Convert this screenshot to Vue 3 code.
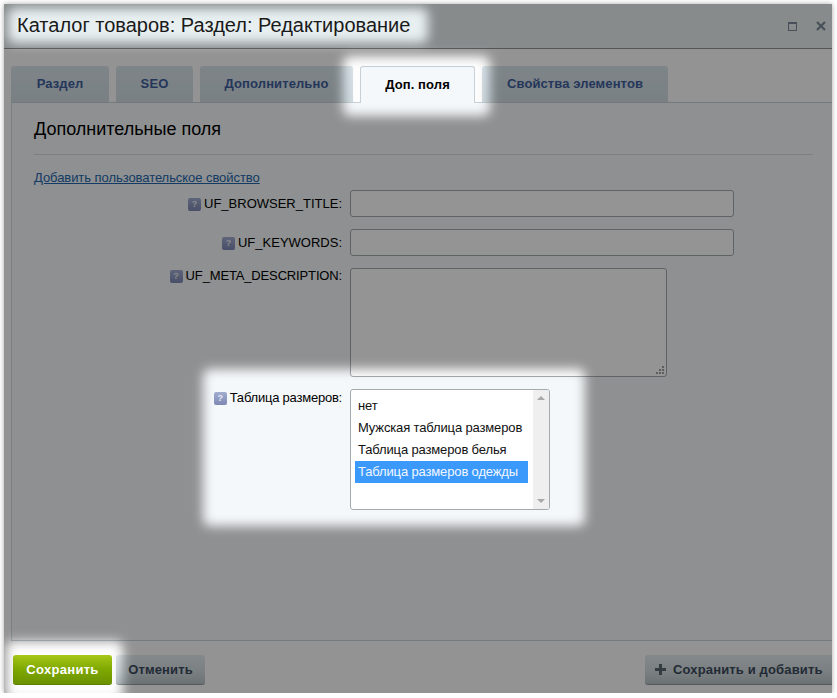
<script setup>
const tabs = [
  { label: 'Раздел', width: 98 },
  { label: 'SEO', width: 77 },
  { label: 'Дополнительно', width: 153 },
  { label: 'Доп. поля', width: 115, active: true },
  { label: 'Свойства элементов', width: 186 }
]
const options = ['нет', 'Мужская таблица размеров', 'Таблица размеров белья', 'Таблица размеров одежды']
</script>

<template>
  <div class="window">
    <header class="titlebar">
      <h1 class="title">Каталог товаров: Раздел: Редактирование</h1>
      <div class="controls">
        <span class="max"></span>
        <svg class="close" width="10" height="10" viewBox="0 0 10 10"><path d="M1 1 9 9M9 1 1 9" stroke="#7b8b9a" stroke-width="2.2" fill="none" /></svg>
      </div>
    </header>

    <main class="main">
      <nav class="tabs">
        <div v-for="t in tabs" :key="t.label" class="tab" :class="{ active: t.active }" :style="{ width: t.width + 'px' }">{{ t.label }}</div>
      </nav>

      <section class="panel">
        <h2 class="heading">Дополнительные поля</h2>
        <div class="divider"></div>
        <a class="add-link" href="#">Добавить пользовательское свойство</a>

        <div class="form">
          <div class="label mid"><span class="help">?</span>UF_BROWSER_TITLE:</div>
          <input class="input" type="text" />

          <div class="label mid"><span class="help">?</span>UF_KEYWORDS:</div>
          <input class="input" type="text" />

          <div class="label tight"><span class="help">?</span>UF_META_DESCRIPTION:</div>
          <div class="area-wrap">
            <textarea class="area"></textarea>
            <svg class="grip" width="9" height="9" viewBox="0 0 9 9" fill="#a0a0a0">
              <rect x="6" y="0" width="2" height="2" /><rect x="3" y="3" width="2" height="2" /><rect x="6" y="3" width="2" height="2" />
              <rect x="0" y="6" width="2" height="2" /><rect x="3" y="6" width="2" height="2" /><rect x="6" y="6" width="2" height="2" />
            </svg>
          </div>

          <div class="label tighter"><span class="help">?</span>Таблица размеров:</div>
          <div class="listbox">
            <div class="options">
              <div v-for="(o, i) in options" :key="o" class="option" :class="{ selected: i === 3 }">{{ o }}</div>
            </div>
            <div class="scrollbar">
              <span class="arrow up"></span>
              <span class="arrow down"></span>
            </div>
          </div>
        </div>
      </section>
    </main>

    <footer class="footer">
      <button class="btn save">Сохранить</button>
      <button class="btn cancel">Отменить</button>
      <button class="btn add"><span class="plus"></span>Сохранить и добавить</button>
    </footer>

    <svg class="dim" width="828" height="689" viewBox="0 0 828 689">
      <defs>
        <filter id="soft" x="-20%" y="-20%" width="140%" height="140%"><feGaussianBlur stdDeviation="5.5" /></filter>
        <mask id="holes" maskUnits="userSpaceOnUse" x="0" y="0" width="828" height="689">
          <rect width="828" height="689" fill="#fff" />
          <g fill="#000" filter="url(#soft)">
            <rect x="4" y="4" width="420" height="35" rx="7" />
            <rect x="339" y="52" width="147" height="60" rx="7" />
            <rect x="199" y="365" width="382" height="157" rx="7" />
            <rect x="2" y="637" width="117" height="60" rx="7" />
          </g>
        </mask>
      </defs>
      <rect width="828" height="689" fill="#000" fill-opacity="0.42" mask="url(#holes)" />
    </svg>
  </div>
</template>

<style>
html, body { margin: 0; background: #fff; }
</style>

<style scoped>
.window {
  position: relative;
  box-sizing: border-box;
  width: 828px;
  height: 689px;
  margin: 4px 0 0 4px;
  display: flex;
  flex-direction: column;
  overflow: hidden;
  background: #fdfdfd;
  box-shadow: 0 0 5px rgba(0, 0, 0, .35);
  font-family: "Liberation Sans", Arial, sans-serif;
  color: #000;
}
.titlebar {
  box-sizing: border-box;
  height: 45px;
  flex: none;
  display: flex;
  align-items: center;
  justify-content: space-between;
  padding: 0 7px 0 13px;
  background: #e8eff1;
  border-bottom: 1px solid #8f9496;
}
.title {
  margin: 0 0 1px;
  font-size: 20px;
  font-weight: 400;
  color: #1a1a1a;
}
.controls { display: flex; align-items: center; gap: 19px; }
.max {
  box-sizing: border-box;
  width: 9px;
  height: 9px;
  border: 1px solid #7b8b9a;
  border-top-width: 2px;
}
.close { display: block; margin-right: -1px; }
.main {
  flex: none;
  display: flex;
  flex-direction: column;
  padding: 17px 0 0 7px;
}
.tabs { display: flex; gap: 7px; height: 36px; flex: none; position: relative; z-index: 1; }
.tab {
  box-sizing: border-box;
  height: 36px;
  display: flex;
  align-items: center;
  justify-content: center;
  padding-bottom: 1px;
  border-radius: 3px 3px 0 0;
  background: linear-gradient(#d9e4ea, #d2dde3);
  color: #3f5f9c;
  font-size: 13px;
  font-weight: 700;
  letter-spacing: .1px;
}
.tab.active {
  height: 37px;
  background: #f5f8fa;
  color: #000;
  border: 1px solid #c6d0d6;
  border-bottom: none;
}
.panel {
  box-sizing: border-box;
  height: 539px;
  flex: none;
  padding: 15px 19px 0 22px;
  background: #f5f8fa;
  border-top: 1px solid #c6d0d6;
  border-left: 1px solid #d3dde3;
  border-bottom: 1px solid #c6d0d6;
}
.heading {
  margin: 0;
  font-size: 18px;
  font-weight: 400;
  line-height: 22px;
}
.divider { height: 1px; margin-top: 14px; background: #d5dcdf; }
.add-link {
  display: block;
  margin-top: 15px;
  margin-bottom: -1px;
  font-size: 13px;
  line-height: 16px;
  letter-spacing: -.06px;
  color: #2467ad;
}
.form {
  display: grid;
  grid-template-columns: 308px auto;
  column-gap: 8px;
  row-gap: 12px;
  margin-top: 5px;
  justify-items: start;
}
.label {
  justify-self: end;
  display: flex;
  align-items: center;
  height: 15px;
  font-size: 13px;
  color: #000;
}
.label.mid { align-self: center; }
.label.tight { letter-spacing: -.15px; }
.label.tighter { letter-spacing: -.22px; margin-top: 1px; }
.help {
  box-sizing: border-box;
  width: 13px;
  height: 13px;
  margin: 2px 3px 0 0;
  border-radius: 2px;
  background: linear-gradient(#a3add0, #7d88b4);
  color: #e8ecf5;
  font-size: 9px;
  font-weight: 700;
  line-height: 13px;
  letter-spacing: 0;
  text-align: center;
}
.input, .area {
  box-sizing: border-box;
  display: block;
  margin: 0;
  padding: 0;
  background: #fff;
  border: 1px solid #a3abae;
  border-radius: 3px;
  outline: none;
}
.input { width: 384px; height: 27px; }
.area-wrap { position: relative; width: 317px; height: 109px; }
.area { width: 100%; height: 100%; resize: none; }
.grip { position: absolute; right: 2px; bottom: 2px; }
.listbox {
  box-sizing: border-box;
  display: flex;
  width: 200px;
  height: 121px;
  background: #fff;
  border: 1px solid #a3abae;
  border-radius: 3px;
  overflow: hidden;
}
.options { flex: 1; padding: 5px 5px 0 4px; }
.option {
  height: 22px;
  padding-left: 3px;
  font-size: 13px;
  line-height: 22px;
  letter-spacing: -.14px;
  white-space: nowrap;
  color: #111;
}
.option.selected { background: #3b99fc; color: #f2f7ff; }
.scrollbar {
  position: relative;
  flex: none;
  width: 16px;
  background: #efefef;
}
.arrow {
  position: absolute;
  left: 4px;
  width: 0;
  height: 0;
  border-left: 4px solid transparent;
  border-right: 4px solid transparent;
}
.arrow.up { top: 6px; border-bottom: 4px solid #a8a8a8; }
.arrow.down { bottom: 6px; border-top: 4px solid #a8a8a8; }
.footer {
  position: relative;
  flex: 1;
  display: flex;
  align-items: flex-start;
  padding: 14px 0 0 9px;
  background: #fdfdfd;
}
.btn {
  box-sizing: border-box;
  height: 30px;
  padding: 0;
  border: none;
  font-family: inherit;
  font-size: 13px;
  font-weight: 700;
  letter-spacing: .15px;
  border-radius: 3px;
  background: linear-gradient(#e4ecef, #d2dade 60%, #bac4c8);
  border-bottom: 1px solid #8f999d;
  color: #3b4a5c;
}
.save {
  width: 99px;
  letter-spacing: .3px;
  background: linear-gradient(#a7c81a, #7fa800 50%, #6b9200);
  border-bottom: 1px solid #5e8000;
  color: #fff;
}
.cancel { width: 89px; margin-left: 4px; }
.add {
  display: flex;
  align-items: center;
  width: 187px;
  margin-left: auto;
  padding-left: 10px;
  border-radius: 3px 0 0 3px;
}
.plus {
  position: relative;
  width: 11px;
  height: 11px;
  margin-right: 7px;
  background:
    linear-gradient(#5b6770, #5b6770) center / 11px 3px no-repeat,
    linear-gradient(#5b6770, #5b6770) center / 3px 11px no-repeat;
}
.dim {
  position: absolute;
  inset: 0;
  pointer-events: none;
  z-index: 5;
}
</style>
